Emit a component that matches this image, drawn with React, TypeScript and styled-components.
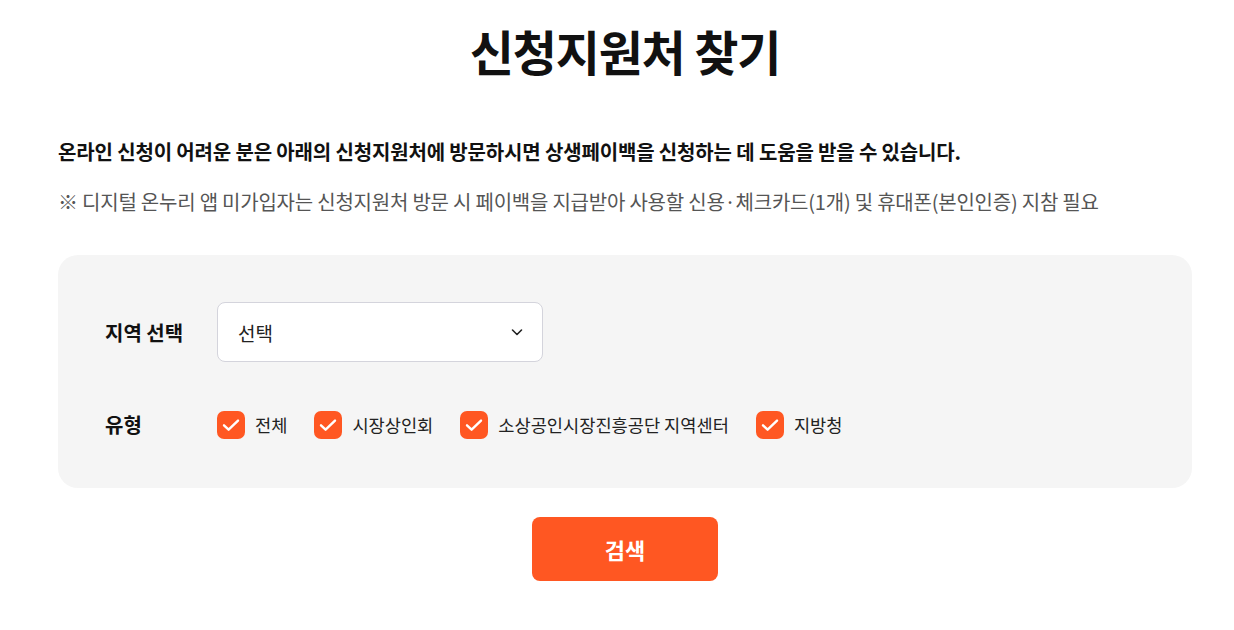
import styled, { createGlobalStyle } from "styled-components";

const GlobalStyle = createGlobalStyle`
  body {
    margin: 0;
    background: #fff;
    font-family: "Noto Sans CJK KR", "Noto Sans", sans-serif;
    color: #111;
  }
  * { box-sizing: border-box; }
`;

const TYPES = ["전체", "시장상인회", "소상공인시장진흥공단 지역센터", "지방청"];

const Check = () => (
  <svg width="18" height="18" viewBox="0 0 18 18" fill="none">
    <path d="M2 9.3l4.6 4.4L16 4.6" stroke="#fff" strokeWidth="2.4" strokeLinecap="round" strokeLinejoin="round" />
  </svg>
);

const Chevron = () => (
  <svg width="14" height="14" viewBox="0 0 14 14" fill="none">
    <path d="M2.5 5l4.5 4.5L11.5 5" stroke="#222" strokeWidth="1.6" strokeLinecap="round" strokeLinejoin="round" />
  </svg>
);

export default function App() {
  return (
    <Page>
      <GlobalStyle />
      <Title>신청지원처 찾기</Title>
      <Lead>
        온라인 신청이 어려운 분은 아래의 신청지원처에 방문하시면 상생페이백을 신청하는 데 도움을 받을 수 있습니다.
      </Lead>
      <Note>
        ※ 디지털 온누리 앱 미가입자는 신청지원처 방문 시 페이백을 지급받아 사용할 신용·체크카드(1개) 및 휴대폰(본인인증) 지참 필요
      </Note>
      <Panel>
        <Row>
          <Label>지역 선택</Label>
          <Select>
            <span>선택</span>
            <Chevron />
          </Select>
        </Row>
        <Row>
          <Label>유형</Label>
          <Options>
            {TYPES.map((t) => (
              <Option key={t}>
                <Box>
                  <Check />
                </Box>
                {t}
              </Option>
            ))}
          </Options>
        </Row>
      </Panel>
      <Actions>
        <SearchButton>검색</SearchButton>
      </Actions>
    </Page>
  );
}

const Page = styled.div`
  width: 1134px;
  margin-left: 58px;
  padding-top: 17px;
`;

const Title = styled.h1`
  margin: 0;
  text-align: center;
  font-size: 48px;
  line-height: 66px;
  font-weight: 700;
  color: #111;
  letter-spacing: -1.2px;
`;

const Lead = styled.p`
  margin: 55px 0 0;
  font-size: 20px;
  line-height: 28px;
  font-weight: 700;
  color: #111;
  letter-spacing: -0.15px;
`;

const Note = styled.p`
  margin: 22px 0 0;
  font-size: 20px;
  line-height: 28px;
  color: #555;
  letter-spacing: -0.22px;
`;

const Panel = styled.div`
  margin-top: 39px;
  background: #f5f5f5;
  border-radius: 20px;
  padding: 47px 47px 49px;
  display: flex;
  flex-direction: column;
  gap: 48px;
`;

const Row = styled.div`
  display: flex;
  align-items: center;
`;

const Label = styled.div`
  width: 112px;
  font-size: 20px;
  font-weight: 700;
  color: #111;
`;

const Select = styled.div`
  width: 326px;
  height: 60px;
  background: #fff;
  border: 1px solid #d4d4dc;
  border-radius: 8px;
  padding: 0 18px 0 20px;
  display: flex;
  align-items: center;
  justify-content: space-between;
  font-size: 19px;
  color: #222;
`;

const Options = styled.div`
  display: flex;
  align-items: center;
  gap: 27px;
`;

const Option = styled.label`
  display: flex;
  align-items: center;
  gap: 10px;
  font-size: 17.6px;
  color: #222;
`;

const Box = styled.span`
  width: 28px;
  height: 28px;
  border-radius: 7px;
  background: #ff5722;
  display: flex;
  align-items: center;
  justify-content: center;
`;

const Actions = styled.div`
  display: flex;
  justify-content: center;
  margin-top: 29px;
`;

const SearchButton = styled.button`
  width: 186px;
  height: 64px;
  border: none;
  border-radius: 8px;
  background: #ff5722;
  color: #fff;
  font-family: inherit;
  font-size: 22px;
  font-weight: 700;
  cursor: pointer;
`;
